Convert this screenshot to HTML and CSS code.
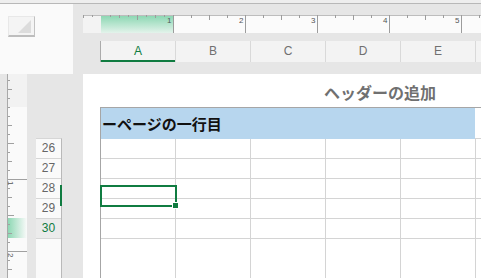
FILE: index.html
```html
<!DOCTYPE html>
<html lang="ja">
<head>
  <meta charset="UTF-8" />
  <meta name="viewport" content="width=device-width, initial-scale=1.0" />
  <title>ページレイアウト</title>
  <link rel="stylesheet" href="styles.css">
</head>
<body>
  <div class="app">
    <div class="titlebar"></div>
    <div class="workspace">
      <div class="corner">
        <div class="corner-panel">
          <div class="select-all">
            <svg width="25" height="18" viewBox="0 0 25 18"><polygon points="9,16 22,16 22,3" fill="#dcdcdc"/></svg>
          </div>
        </div>
      </div>

      <div class="top-area">
        <svg class="hruler" id="hruler" width="398" height="18" viewBox="0 0 398 18">
          <defs>
            <linearGradient id="gh" x1="0" y1="0" x2="0" y2="1">
              <stop offset="0" stop-color="#88d6b0"/>
              <stop offset="1" stop-color="#e3f3eb"/>
            </linearGradient>
          </defs>
          <rect x="0" y="0" width="18" height="18" fill="#f3f3f3"/>
          <rect x="18" y="0" width="72" height="18" fill="url(#gh)"/>
          <rect x="90" y="0" width="308" height="18" fill="#fbfbfb"/>
          <path d="M0 0.5H398" stroke="#bdbdbd"/>
          <path id="hticks" stroke="#9c9c9c" fill="none"/>
        </svg>
        <div class="colheads">
          <div class="colhead active">A</div>
          <div class="colhead">B</div>
          <div class="colhead">C</div>
          <div class="colhead">D</div>
          <div class="colhead">E</div>
          <div class="colhead rest"></div>
        </div>
      </div>

      <div class="side-area">
        <svg class="vruler" id="vruler" width="20" height="204" viewBox="0 0 20 204">
          <defs>
            <linearGradient id="gv" x1="0" y1="0" x2="1" y2="0">
              <stop offset="0" stop-color="#88d6b0"/>
              <stop offset="1" stop-color="#fafafa"/>
            </linearGradient>
          </defs>
          <rect x="0" y="0" width="20" height="33" fill="#f2f2f2"/>
          <rect x="0" y="33" width="20" height="171" fill="#fafafa"/>
          <rect x="0" y="144" width="20" height="20" fill="url(#gv)"/>
          <path d="M0.5 0V204" stroke="#a9a9a9"/>
          <path id="vticks" stroke="#a0a0a0" fill="none"/>
        </svg>
        <div class="rowheads">
          <div class="rowlist">
            <div class="rowhead">26</div>
            <div class="rowhead">27</div>
            <div class="rowhead">28</div>
            <div class="rowhead">29</div>
            <div class="rowhead active">30</div>
            <span class="row-mark"></span>
          </div>
        </div>
      </div>

      <div class="page">
        <div class="page-header">ヘッダーの追加</div>
        <div class="sheet">
          <div class="title-row">
            <div class="title-cell">ーページの一行目</div>
            <div class="title-rest"></div>
          </div>
          <div class="row"><div class="cell"></div><div class="cell"></div><div class="cell"></div><div class="cell"></div><div class="cell"></div><div class="cell rest"></div></div>
          <div class="row"><div class="cell"></div><div class="cell"></div><div class="cell"></div><div class="cell"></div><div class="cell"></div><div class="cell rest"></div></div>
          <div class="row"><div class="cell"></div><div class="cell"></div><div class="cell"></div><div class="cell"></div><div class="cell"></div><div class="cell rest"></div></div>
          <div class="row"><div class="cell"></div><div class="cell"></div><div class="cell"></div><div class="cell"></div><div class="cell"></div><div class="cell rest"></div></div>
          <div class="row"><div class="cell"></div><div class="cell"></div><div class="cell"></div><div class="cell"></div><div class="cell"></div><div class="cell rest"></div></div>
          <div class="row fill"><div class="cell"></div><div class="cell"></div><div class="cell"></div><div class="cell"></div><div class="cell"></div><div class="cell rest"></div></div>

          <div class="selection"><span class="fill-handle"></span></div>
        </div>
      </div>
    </div>
  </div>

  <script>
    const NS = 'http://www.w3.org/2000/svg';

    function addLabel(svg, text, attrs) {
      const t = document.createElementNS(NS, 'text');
      for (const k in attrs) t.setAttribute(k, attrs[k]);
      t.setAttribute('class', 'ruler-num');
      t.textContent = text;
      svg.appendChild(t);
    }

    // 横ルーラー（1目盛り = 1/8インチ = 9px）
    const hruler = document.getElementById('hruler');
    let hd = '';
    for (let i = -2; 18 + 9 * i < 398; i++) {
      const x = 18 + 9 * i + 0.5;
      let len;
      if (i % 8 === 0) {
        if (i === 0) continue;
        len = 18;
        addLabel(hruler, i / 8, { x: x - 2, y: 8, 'text-anchor': 'end' });
      } else if (i % 4 === 0) len = 5;
      else if (i % 2 === 0) len = 3;
      else if (x < 90) len = 2;
      else continue;
      hd += `M${x} 0v${len}`;
    }
    document.getElementById('hticks').setAttribute('d', hd);

    // 縦ルーラー
    const vruler = document.getElementById('vruler');
    let vd = '';
    for (let i = -3; 33 + 9 * i < 204; i++) {
      const y = 33 + 9 * i + 0.5;
      let len;
      if (i % 8 === 0) {
        if (i === 0) { len = 2; }
        else {
          len = 20;
          addLabel(vruler, i / 8, { transform: `translate(1 ${y + 1.5}) rotate(90)` });
        }
      } else if (i % 4 === 0) len = 6;
      else if (i % 2 === 0) len = 4;
      else len = 2;
      vd += `M1 ${y}h${len}`;
    }
    document.getElementById('vticks').setAttribute('d', vd);
  </script>
</body>
</html>
```

FILE: styles.css
```css
:root {
  --green: #107c41;
  --grid: #d4d4d4;
}

body {
  margin: 0;
  background: #e6e6e6;
  font-family: "Liberation Sans", "Noto Sans CJK JP", sans-serif;
  overflow: hidden;
}

.app {
  width: 481px;
  height: 278px;
  display: flex;
  flex-direction: column;
}

.titlebar {
  flex: none;
  height: 3px;
  background: #eeeeee;
  border-bottom: 1px solid #b8b8b8;
}

.workspace {
  flex: 1;
  min-height: 0;
  display: grid;
  grid-template-columns: 83px 398px;
  grid-template-rows: 70px 204px;
}

/* 左上の全選択ボタン */
.corner-panel {
  width: 73px;
  height: 100%;
  box-sizing: border-box;
  padding: 12px 0 0 8px;
  background: #fafafa;
}

.select-all {
  width: 27px;
  height: 21px;
  box-sizing: border-box;
  background: #f4f4f4;
  border: 1px solid #e8e8e8;
  border-right-color: #c2c2c2;
  border-bottom: 2px solid #bdbdbd;
}

.select-all svg {
  display: block;
}

/* ルーラーと列見出し */
.top-area {
  padding-top: 11px;
}

.hruler,
.vruler {
  display: block;
  flex: none;
}

.ruler-num {
  font-family: "Liberation Sans", sans-serif;
  font-size: 8px;
  fill: #555;
}

.colheads {
  display: flex;
  height: 21px;
  margin: 8px 0 0 17px;
  background: #f3f3f3;
  border-left: 1px solid #ababab;
  overflow: hidden;
}

.colhead {
  flex: none;
  width: 75px;
  box-sizing: border-box;
  border-right: 1px solid #d9d9d9;
  text-align: center;
  font-size: 12px;
  line-height: 21px;
  color: #707070;
}

.colhead.active {
  color: var(--green);
  box-shadow: inset 0 -2px var(--green);
}

.colhead.rest {
  flex: 1;
  border-right: none;
}

/* 縦ルーラーと行番号 */
.side-area {
  display: flex;
  padding-left: 7px;
}

.rowheads {
  flex: none;
  width: 26px;
  margin-left: 9px;
  padding-top: 64px;
  display: flex;
  flex-direction: column;
}

.rowlist {
  flex: 1;
  position: relative;
  background: #fafafa;
  border-top: 1px solid #d6d6d6;
  border-right: 1px solid #b9b9b9;
}

.rowhead {
  height: 20px;
  box-sizing: border-box;
  border-bottom: 1px solid #d6d6d6;
  text-align: center;
  font-size: 12px;
  line-height: 19px;
  color: #666;
}

.rowhead.active {
  background: #ebebeb;
  color: var(--green);
}

.row-mark {
  position: absolute;
  top: 46px;
  right: -1px;
  width: 2px;
  height: 21px;
  background: var(--green);
}

/* ページ */
.page {
  display: flex;
  flex-direction: column;
  min-height: 0;
  padding-left: 17px;
  background: #fff;
  overflow: hidden;
}

.page-header {
  flex: none;
  height: 33px;
  box-sizing: border-box;
  padding: 8px 0 0 224px;
  font-family: "Noto Sans CJK JP", sans-serif;
  font-weight: bold;
  font-size: 16px;
  line-height: 20px;
  color: #707070;
  white-space: nowrap;
}

.sheet {
  flex: 1;
  position: relative;
  display: flex;
  flex-direction: column;
  border-left: 1px solid #a6a6a6;
  border-top: 1px solid #a6a6a6;
}

.title-row {
  flex: none;
  display: flex;
  height: 31px;
}

.title-cell {
  flex: none;
  width: 374px;
  box-sizing: border-box;
  padding-left: 1px;
  background: #b7d6ee;
  font-family: "Noto Sans CJK JP", sans-serif;
  font-weight: bold;
  font-size: 15px;
  line-height: 31px;
  color: #111;
  white-space: nowrap;
}

.title-rest {
  flex: 1;
  border-bottom: 1px solid var(--grid);
}

.row {
  flex: none;
  display: flex;
  height: 20px;
  box-sizing: border-box;
  border-bottom: 1px solid var(--grid);
}

.row.fill {
  flex: 1;
  border-bottom: none;
}

.cell {
  flex: none;
  width: 75px;
  box-sizing: border-box;
  border-right: 1px solid var(--grid);
}

.cell.rest {
  flex: 1;
  border-right: none;
}

/* 選択セル */
.selection {
  position: absolute;
  left: -1px;
  top: 77px;
  width: 77px;
  height: 22px;
  box-sizing: border-box;
  border: 2px solid var(--green);
}

.fill-handle {
  position: absolute;
  left: 70px;
  top: 15px;
  width: 5px;
  height: 5px;
  background: var(--green);
  border: 1px solid #fff;
}
```
